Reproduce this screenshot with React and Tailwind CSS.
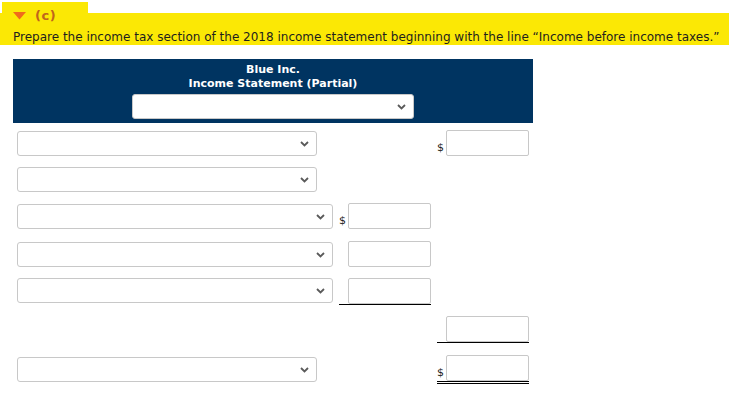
import React from "react";

const Chevron = () => (
  <svg width="9" height="6" viewBox="0 0 9 6" className="absolute right-[7px] top-1/2 -translate-y-1/2">
    <path d="M1 1 L4.5 4.5 L8 1" fill="none" stroke="#5a5a5a" strokeWidth="1.8" />
  </svg>
);

const Select = ({ w }) => (
  <div className={`relative h-[25px] ${w} rounded-[3px] border border-[#c8c8c8] bg-white`}>
    <Chevron />
  </div>
);

const Box = () => (
  <div className="h-[26px] w-[83px] rounded-[2px] border border-[#c8c8c8] bg-white" />
);

const Dollar = ({ show }) => (
  <span className="w-[9px] text-[11px] leading-[14px] text-[#222] pb-[1px]">
    {show ? "$" : ""}
  </span>
);

const Cell = ({ dollar, line }) => {
  const border =
    line === "single"
      ? "border-b border-black"
      : line === "double"
      ? "border-b-[3px] border-double border-black"
      : "";
  return (
    <div className={`flex items-end w-[92px] ${border}`}>
      <Dollar show={dollar} />
      <Box />
    </div>
  );
};

export default function App() {
  return (
    <div
      className="relative w-[729px] h-[403px] bg-white overflow-hidden"
      style={{ fontFamily: "'DejaVu Sans', Verdana, sans-serif" }}
    >
      {/* highlighted heading */}
      <div className="relative">
        <div className="absolute left-[2px] top-[2px] w-[86px] h-[20px] bg-[#fbe805]" />
        <div className="absolute left-0 top-[13px] w-[729px] h-[32px] bg-[#fbe805]" />
        <div className="relative pt-[7px] pl-[13px]">
          <div className="flex items-center gap-[9px] h-[17px]">
            <svg width="13" height="8" viewBox="0 0 13 8">
              <path d="M0 0 H13 L6.5 7.5 Z" fill="#f06a1c" />
            </svg>
            <span className="text-[13px] text-[#c0641c] font-bold tracking-[0.5px]">(c)</span>
          </div>
          <p className="text-[12px] leading-[16px] mt-[5px] text-[#1e1e1e] whitespace-nowrap">
            Prepare the income tax section of the 2018 income statement beginning with the line “Income before income taxes.”
          </p>
        </div>
      </div>

      {/* statement */}
      <div className="ml-[13px] mt-[14px] w-[520px]">
        <div className="bg-[#003461] pt-[4px] pb-[4px] flex flex-col items-center">
          <div className="text-white font-bold text-[11px] leading-[14px]">Blue Inc.</div>
          <div className="text-white font-bold text-[11px] leading-[14px]">
            Income Statement (Partial)
          </div>
          <div className="mt-[3px]">
            <Select w="w-[282px]" />
          </div>
        </div>

        <div className="pl-[4px]">
          {/* row 1 */}
          <div className="flex items-end mt-[7px]">
            <Select w="w-[300px]" />
            <div className="ml-[120px]">
              <Cell dollar />
            </div>
          </div>
          {/* row 2 */}
          <div className="flex items-end mt-[11px]">
            <Select w="w-[300px]" />
          </div>
          {/* row 3 */}
          <div className="flex items-end mt-[11px]">
            <Select w="w-[316px]" />
            <div className="ml-[6px]">
              <Cell dollar />
            </div>
          </div>
          {/* row 4 */}
          <div className="flex items-end mt-[12px]">
            <Select w="w-[316px]" />
            <div className="ml-[6px]">
              <Cell />
            </div>
          </div>
          {/* row 5 */}
          <div className="flex items-start mt-[11px]">
            <Select w="w-[316px]" />
            <div className="ml-[6px]">
              <Cell line="single" />
            </div>
          </div>
          {/* row 6 */}
          <div className="flex items-end mt-[11px]">
            <div className="ml-[420px]">
              <Cell line="single" />
            </div>
          </div>
          {/* row 7 */}
          <div className="flex items-start mt-[12px]">
            <div className="mt-[2px]">
              <Select w="w-[300px]" />
            </div>
            <div className="ml-[120px]">
              <Cell dollar line="double" />
            </div>
          </div>
        </div>
      </div>
    </div>
  );
}
